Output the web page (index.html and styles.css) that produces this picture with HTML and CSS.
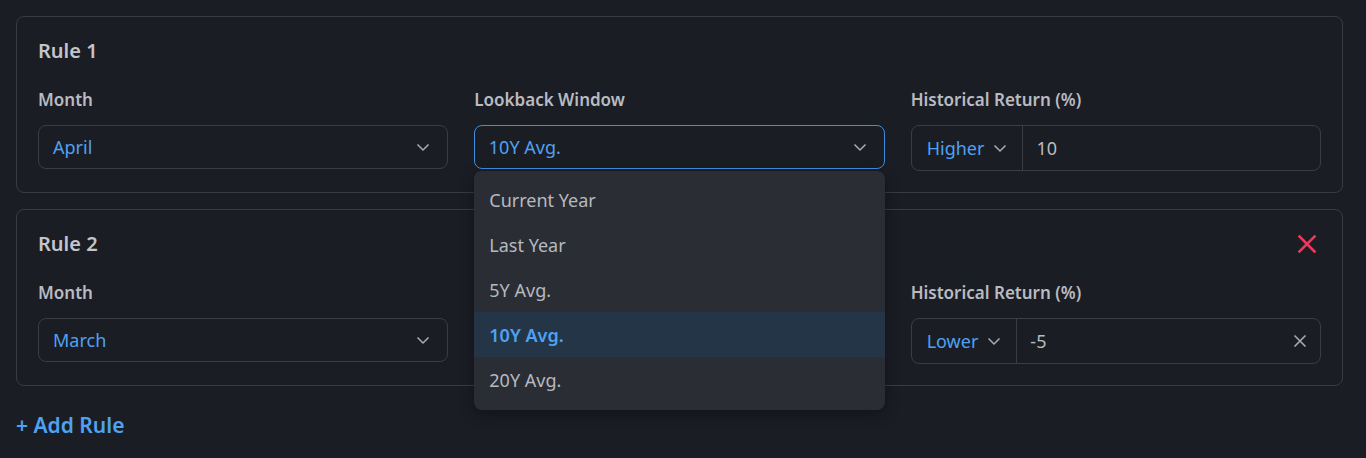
FILE: index.html
```html
<!DOCTYPE html>
<html lang="en">
<head>
<meta charset="utf-8">
<title>Rules</title>
<link rel="stylesheet" href="styles.css">
</head>
<body>
<div class="page">
  <section class="card">
    <div class="card-head">
      <h2 class="card-title">Rule 1</h2>
    </div>
    <div class="fields">
      <div class="field">
        <label class="label">Month</label>
        <div class="select">
          <span class="select-value">April</span>
          <svg class="chev" viewBox="0 0 16 16"><path d="M2.5 5.5 8 11l5.5-5.5"/></svg>
        </div>
      </div>
      <div class="field">
        <label class="label">Lookback Window</label>
        <div class="select-wrap">
          <div class="select focused">
            <span class="select-value">10Y Avg.</span>
            <svg class="chev" viewBox="0 0 16 16"><path d="M2.5 5.5 8 11l5.5-5.5"/></svg>
          </div>
          <ul class="dropdown">
            <li class="option">Current Year</li>
            <li class="option">Last Year</li>
            <li class="option">5Y Avg.</li>
            <li class="option selected">10Y Avg.</li>
            <li class="option">20Y Avg.</li>
          </ul>
        </div>
      </div>
      <div class="field">
        <label class="label">Historical Return (%)</label>
        <div class="group">
          <div class="group-select">
            <span class="select-value">Higher</span>
            <svg class="chev" viewBox="0 0 16 16"><path d="M2.5 5.5 8 11l5.5-5.5"/></svg>
          </div>
          <div class="group-input">
            <span class="input-value">10</span>
          </div>
        </div>
      </div>
    </div>
  </section>

  <section class="card">
    <div class="card-head">
      <h2 class="card-title">Rule 2</h2>
      <svg class="remove" viewBox="0 0 20 20"><path d="M2.5 2.5 17.5 17.5M17.5 2.5 2.5 17.5"/></svg>
    </div>
    <div class="fields">
      <div class="field">
        <label class="label">Month</label>
        <div class="select">
          <span class="select-value">March</span>
          <svg class="chev" viewBox="0 0 16 16"><path d="M2.5 5.5 8 11l5.5-5.5"/></svg>
        </div>
      </div>
      <div class="field covered">
        <div class="label-space"></div>
        <div class="select">
          <span class="select-value"></span>
          <svg class="chev" viewBox="0 0 16 16"><path d="M2.5 5.5 8 11l5.5-5.5"/></svg>
        </div>
      </div>
      <div class="field">
        <label class="label">Historical Return (%)</label>
        <div class="group">
          <div class="group-select">
            <span class="select-value">Lower</span>
            <svg class="chev" viewBox="0 0 16 16"><path d="M2.5 5.5 8 11l5.5-5.5"/></svg>
          </div>
          <div class="group-input">
            <span class="input-value">-5</span>
            <svg class="clear" viewBox="0 0 14 14"><path d="M1.5 1.5 12.5 12.5M12.5 1.5 1.5 12.5"/></svg>
          </div>
        </div>
      </div>
    </div>
  </section>

  <button class="add">+ Add Rule</button>
</div>
</body>
</html>
```

FILE: styles.css
```css
* { box-sizing: border-box; }
html, body {
  margin: 0;
  padding: 0;
  background: #1b1d24;
  font-family: "Noto Sans", "Open Sans", sans-serif;
  height: 458px;
  overflow: hidden;
}
.page {
  padding: 16px 23px 0 16px;
  display: flex;
  flex-direction: column;
  gap: 16px;
}
.card {
  border: 1px solid #383b42;
  border-radius: 8px;
  padding: 20px 21px 21px 21px;
}
.card-head {
  display: flex;
  align-items: center;
  justify-content: space-between;
  height: 28px;
  margin-bottom: 23px;
}
.card-title {
  margin: 0;
  font-size: 20px;
  line-height: 28px;
  font-weight: 600;
  color: #c3c5cb;
}
.remove {
  width: 20px;
  height: 20px;
  margin-right: 4px;
  fill: none;
  stroke: #f2365a;
  stroke-width: 2.6;
  stroke-linecap: square;
}
.fields {
  display: grid;
  grid-template-columns: 1fr 1fr 1fr;
  gap: 26px;
}
.field {
  display: flex;
  flex-direction: column;
}
.label {
  font-size: 17px;
  line-height: 24px;
  font-weight: 600;
  color: #b9bbc1;
  margin-bottom: 13px;
}
.label-space {
  height: 24px;
  margin-bottom: 13px;
}
.select-wrap {
  position: relative;
}
.select {
  height: 44px;
  border: 1px solid #3a3d44;
  border-radius: 8px;
  display: flex;
  align-items: center;
  justify-content: space-between;
  padding: 0 16px 0 14px;
}
.select.focused {
  border: 1.5px solid #3d8fe3;
  padding-left: 13.5px;
}
.select-value {
  font-size: 18px;
  color: #4ea2f2;
  line-height: 24px;
}
.chev {
  width: 16px;
  height: 16px;
  fill: none;
  stroke: #a9acb3;
  stroke-width: 1.5;
}
.dropdown {
  position: absolute;
  left: 0;
  right: 0;
  top: 46px;
  margin: 0;
  list-style: none;
  padding: 6px 0 8px 0;
  background: #2a2d34;
  border-radius: 8px;
  box-shadow: 0 4px 14px rgba(0, 0, 0, 0.35);
  z-index: 5;
}
.option {
  height: 45px;
  display: flex;
  align-items: center;
  padding-left: 15px;
  font-size: 18px;
  color: #b6b9c0;
}
.option.selected {
  background: #243548;
  color: #4ea2f2;
  font-weight: 600;
}
.group {
  height: 46px;
  border: 1px solid #3a3d44;
  border-radius: 8px;
  display: flex;
  align-items: stretch;
}
.group-select {
  display: flex;
  align-items: center;
  gap: 8px;
  padding: 0 14px 0 15px;
  border-right: 1px solid #3a3d44;
}
.group-input {
  flex: 1;
  display: flex;
  align-items: center;
  justify-content: space-between;
  padding: 0 13px 0 13px;
}
.input-value {
  font-size: 18px;
  color: #b9bbc1;
}
.clear {
  width: 14px;
  height: 14px;
  fill: none;
  stroke: #a9acb3;
  stroke-width: 1.6;
}
.add {
  align-self: flex-start;
  margin-top: 9px;
  background: none;
  border: none;
  padding: 0;
  font-family: inherit;
  font-size: 21px;
  line-height: 28px;
  font-weight: 600;
  color: #4ea2f2;
  cursor: pointer;
}
```
